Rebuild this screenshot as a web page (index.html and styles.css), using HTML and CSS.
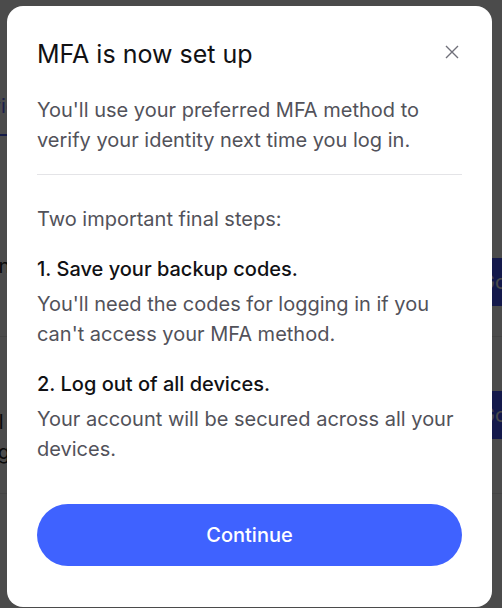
FILE: index.html
```html
<!DOCTYPE html>
<html lang="en">
<head>
<meta charset="utf-8">
<title>MFA is now set up</title>
<link rel="stylesheet" href="styles.css">
</head>
<body>
<div class="page">
  <div class="tabs">
    <span class="tab">Devices</span>
  </div>
  <div class="row row-one">
    <span class="row-label">Account</span>
    <span class="row-action">Go</span>
  </div>
  <div class="row row-two">
    <span class="row-label">All<br>Sign in</span>
    <span class="row-action">Go</span>
  </div>
  <div class="row row-three"></div>
</div>

<div class="backdrop">
  <div class="modal" role="dialog" aria-labelledby="mfa-title">
    <button class="close" aria-label="Close">
      <svg width="14" height="14" viewBox="0 0 14 14" aria-hidden="true">
        <path d="M1 1 L13 13 M13 1 L1 13" stroke="#70707a" stroke-width="1.4"/>
      </svg>
    </button>
    <h1 class="title" id="mfa-title">MFA is now set up</h1>
    <p class="text intro">You'll use your preferred MFA method to verify your identity next time you log in.</p>
    <hr class="divider">
    <p class="text">Two important final steps:</p>
    <div class="step">
      <h2 class="step-title">1. Save your backup codes.</h2>
      <p class="text">You'll need the codes for logging in if you can't access your MFA method.</p>
    </div>
    <div class="step">
      <h2 class="step-title">2. Log out of all devices.</h2>
      <p class="text">Your account will be secured across all your devices.</p>
    </div>
    <button class="continue">Continue</button>
  </div>
</div>
</body>
</html>
```

FILE: styles.css
```css
* { box-sizing: border-box; }

html, body {
  margin: 0;
  padding: 0;
  height: 100%;
  overflow: hidden;
}

body {
  font-family: Inter, "Noto Sans", "Liberation Sans", sans-serif;
  background: #ffffff;
  color: #1a1a1a;
}

/* ---------- background page (dimmed) ---------- */
.page {
  display: flex;
  flex-direction: column;
  overflow: hidden;
  height: 608px;
}

.tabs {
  flex: 0 0 137px;
  padding-top: 95px;
  display: flex;
}

.tab {
  display: block;
  margin-left: -36px;
  font-size: 20px;
  line-height: 22px;
  height: 41px;
  padding-bottom: 17px;
  color: #5b6cff;
  border-bottom: 2px solid #4a5cf0;
  white-space: nowrap;
}

.row {
  display: flex;
  justify-content: space-between;
  align-items: flex-start;
  border-bottom: 1px solid #e8e8e8;
}

.row-label {
  font-size: 20px;
  line-height: 30px;
  color: #222;
  white-space: nowrap;
}

.row-action {
  width: 60px;
  height: 48px;
  margin-right: -50px;
  background: #4656ff;
  color: #ffffff;
  font-size: 20px;
  line-height: 48px;
  padding-left: 0;
  text-indent: -12px;
  overflow: hidden;
  white-space: nowrap;
}

.row-one {
  flex: 0 0 200px;
}

.row-one .row-label {
  margin-top: 114px;
  margin-left: -62px;
}

.row-one .row-action {
  margin-top: 121px;
}

.row-two {
  flex: 0 0 157px;
}

.row-two .row-label {
  margin-top: 70px;
  margin-left: -20px;
}

.row-two .row-action {
  margin-top: 54px;
}

.row-three {
  flex: 1 0 auto;
  border-bottom: none;
}

/* ---------- modal ---------- */
.backdrop {
  position: fixed;
  inset: 0;
  background: rgba(0, 0, 0, 0.705);
}

.modal {
  position: absolute;
  top: 6px;
  left: 7px;
  width: 485px;
  height: 601px;
  background: #ffffff;
  border-radius: 16px;
  padding: 33px 30px 40px;
  display: flex;
  flex-direction: column;
}

.close {
  position: absolute;
  top: 39px;
  left: 438px;
  width: 14px;
  height: 14px;
  padding: 0;
  border: 0;
  background: none;
  cursor: pointer;
  display: flex;
}

.title {
  margin: 0;
  font-size: 25px;
  line-height: 30px;
  font-weight: 400;
  color: #111114;
}

.text {
  margin: 0;
  font-size: 20px;
  line-height: 30px;
  color: #52525a;
}

.intro {
  margin-top: 26px;
}

.divider {
  margin: 19px 0 29px;
  border: 0;
  border-top: 1px solid #e4e4e7;
  height: 0;
}

.step {
  margin-top: 20px;
  display: flex;
  flex-direction: column;
  gap: 5px;
}

.step-title {
  margin: 0;
  font-size: 20px;
  line-height: 30px;
  font-weight: 500;
  color: #111114;
}

.continue {
  margin-top: 40px;
  height: 62px;
  width: 100%;
  border: 0;
  border-radius: 31px;
  background: #3f62ff;
  color: #ffffff;
  font-family: inherit;
  font-size: 20px;
  font-weight: 500;
  cursor: pointer;
}
```
